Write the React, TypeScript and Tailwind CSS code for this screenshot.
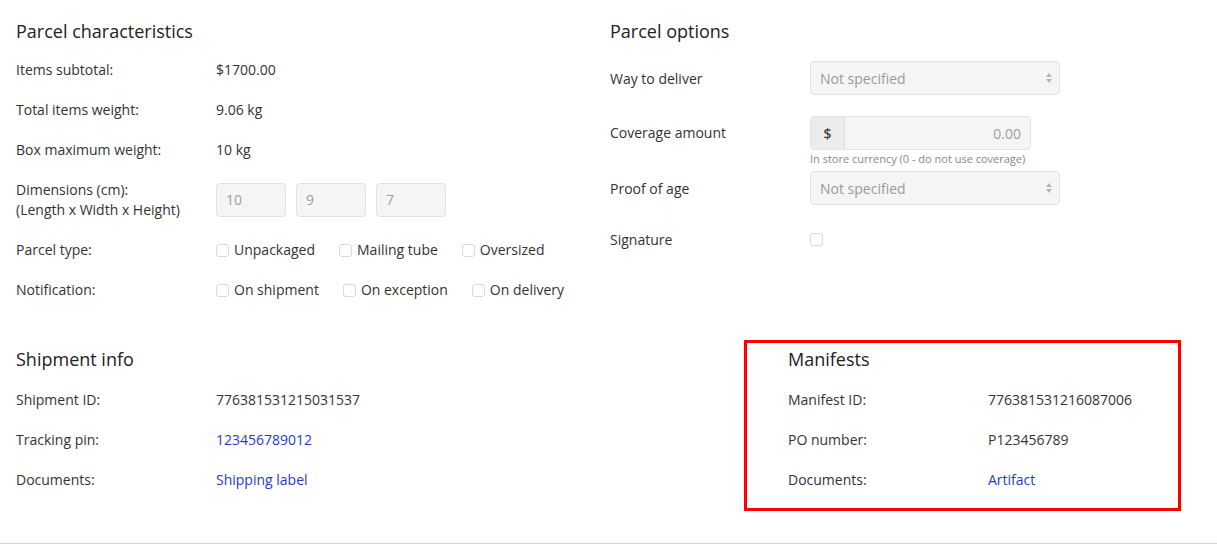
import React from 'react';

const font = { fontFamily: '"Open Sans", "Liberation Sans", sans-serif' };

function Row({ label, children, className = '' }: { label: React.ReactNode; children?: React.ReactNode; className?: string }) {
  return (
    <div className={`flex items-center py-[10px] ${className}`}>
      <div className="w-[200px] shrink-0 leading-5">{label}</div>
      <div className="flex items-center leading-5">{children}</div>
    </div>
  );
}

function Check({ label }: { label?: string }) {
  return (
    <label className="mr-6 flex items-center">
      <span className="mr-[5px] inline-block h-[13px] w-[13px] rounded-[3px] border border-[#d9d9d9] bg-white" />
      {label && <span>{label}</span>}
    </label>
  );
}

function Select() {
  return (
    <div className="flex h-[34px] w-[250px] items-center justify-between rounded-[4px] border border-[#e2e2e2] bg-[#f5f5f5] pl-[9px] pr-[6px] text-[#9a9a9a]">
      <span>Not specified</span>
      <svg width="8" height="12" viewBox="0 0 8 12">
        <path d="M4 1 L7 5 H1 Z" fill="#b5b5b5" />
        <path d="M4 11 L7 7 H1 Z" fill="#b5b5b5" />
      </svg>
    </div>
  );
}

function Heading({ children, className = 'mb-[7px]' }: { children: React.ReactNode; className?: string }) {
  return <h2 className={`text-[18px] leading-6 text-[#222] ${className}`}>{children}</h2>;
}

export default function App() {
  return (
    <div style={font} className="h-[544px] w-full overflow-hidden border-b border-[#d5d5d5] bg-white text-[14px] text-[#333]">
      <div className="flex pt-[19px]">
        <section className="w-[594px] pl-4">
          <Heading>Parcel characteristics</Heading>
          <Row label="Items subtotal:">$1700.00</Row>
          <Row label="Total items weight:">9.06 kg</Row>
          <Row label="Box maximum weight:">10 kg</Row>
          <Row
            label={
              <>
                Dimensions (cm):
                <br />
                (Length x Width x Height)
              </>
            }
          >
            <div className="flex gap-[10px]">
              {['10', '9', '7'].map((v) => (
                <div
                  key={v}
                  className="flex h-[34px] w-[70px] items-center rounded-[4px] border border-[#e2e2e2] bg-[#f5f5f5] px-[9px] text-[#a0a0a0]"
                >
                  {v}
                </div>
              ))}
            </div>
          </Row>
          <Row label="Parcel type:">
            <Check label="Unpackaged" />
            <Check label="Mailing tube" />
            <Check label="Oversized" />
          </Row>
          <Row label="Notification:">
            <Check label="On shipment" />
            <Check label="On exception" />
            <Check label="On delivery" />
          </Row>
        </section>

        <section className="pl-4">
          <Heading>Parcel options</Heading>
          <div className="flex items-center pt-[11px]">
            <div className="w-[200px] shrink-0">Way to deliver</div>
            <Select />
          </div>
          <div className="flex pt-[21px]">
            <div className="w-[200px] shrink-0 pt-[6px]">Coverage amount</div>
            <div>
              <div className="flex h-[34px] w-[221px] rounded-[4px] border border-[#e2e2e2] bg-[#f5f5f5]">
                <div className="flex w-[34px] items-center justify-center rounded-l-[4px] border-r border-[#dcdcdc] bg-[#ececec] font-semibold text-[#444]">
                  $
                </div>
                <div className="flex flex-1 items-center justify-end pr-[9px] text-[#a0a0a0]">0.00</div>
              </div>
              <div className="mt-[1px] text-[11px] leading-4 text-[#888]">In store currency (0 - do not use coverage)</div>
            </div>
          </div>
          <div className="flex items-center pt-[4px]">
            <div className="w-[200px] shrink-0">Proof of age</div>
            <Select />
          </div>
          <div className="flex items-center pt-[24px]">
            <div className="w-[200px] shrink-0">Signature</div>
            <Check />
          </div>
        </section>
      </div>

      <div className="mt-[30px] flex">
        <section className="w-[744px] pl-4 pt-[7px]">
          <Heading className="mb-[9px]">Shipment info</Heading>
          <Row label="Shipment ID:">776381531215031537</Row>
          <Row label="Tracking pin:">
            <a className="text-[#1f3cc2]">123456789012</a>
          </Row>
          <Row label="Documents:">
            <a className="text-[#1f3cc2]">Shipping label</a>
          </Row>
        </section>
        <section className="h-[171px] w-[437px] border-[3px] border-[#ff0000] pl-[41px] pt-[4px]">
          <Heading className="mb-[9px]">Manifests</Heading>
          <Row label="Manifest ID:">776381531216087006</Row>
          <Row label="PO number:">P123456789</Row>
          <Row label="Documents:">
            <a className="text-[#1f3cc2]">Artifact</a>
          </Row>
        </section>
      </div>
    </div>
  );
}
